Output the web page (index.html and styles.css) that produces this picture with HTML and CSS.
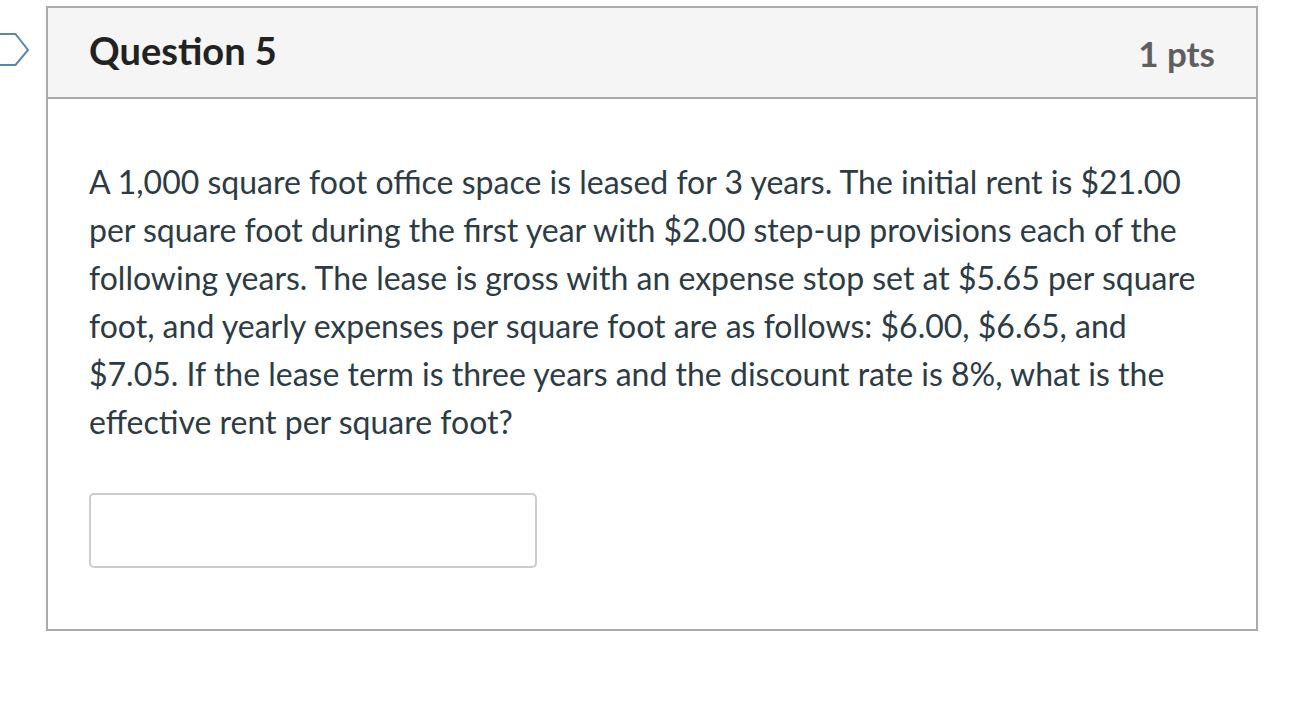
FILE: index.html
```html
<!DOCTYPE html>
<html lang="en">
<head>
<meta charset="utf-8">
<title>Question 5</title>
<link rel="stylesheet" href="styles.css">
</head>
<body>
<div class="page">
  <svg class="marker" width="32" height="36" viewBox="0 0 32 36" aria-hidden="true">
    <path d="M-4 1 H15.5 L28 17 L15.5 32 H-4" fill="none" stroke="#5a88ad" stroke-width="2"/>
  </svg>
  <div class="question">
    <div class="q-header">
      <span class="q-name">Question 5</span>
      <span class="q-points">1 pts</span>
    </div>
    <div class="q-body">
      <p class="q-text">A 1,000 square foot office space is leased for 3 years. The initial rent is $21.00 per square foot during the first year with $2.00 step-up provisions each of the following years. The lease is gross with an expense stop set at $5.65 per square foot, and yearly expenses per square foot are as follows: $6.00, $6.65, and $7.05. If the lease term is three years and the discount rate is 8%, what is the effective rent per square foot?</p>
      <input class="answer" type="text" aria-label="Answer">
    </div>
  </div>
</div>
</body>
</html>
```
FILE: styles.css
```css
html, body {
  margin: 0;
  padding: 0;
  background: #fff;
}
body {
  font-family: Lato, "Open Sans", sans-serif;
  color: #2d3b45;
}
.page {
  position: relative;
  padding: 6px 0 0 46px;
}
.marker {
  position: absolute;
  left: 0;
  top: 33px;
}
.question {
  width: 1208px;
  border: 2px solid #aaaaaa;
}
.q-header {
  height: 89px;
  background: #f5f5f5;
  border-bottom: 2px solid #aaaaaa;
  display: flex;
  align-items: center;
  justify-content: space-between;
  padding: 0 41px 0 41px;
}
.q-name {
  font-weight: 700;
  font-size: 38px;
  color: #222222;
  margin-top: -5px;
}
.q-points {
  font-weight: 700;
  font-size: 35px;
  color: #5f5f5f;
}
.q-body {
  padding: 59px 41px 61px 41px;
}
.q-text {
  margin: 0;
  font-size: 32px;
  line-height: 48px;
}
.answer {
  display: block;
  box-sizing: border-box;
  margin-top: 47px;
  width: 448px;
  height: 75px;
  border: 2px solid #cccccc;
  border-radius: 5px;
  background: #fff;
  font-family: inherit;
  font-size: 32px;
  padding: 0 14px;
}
```
